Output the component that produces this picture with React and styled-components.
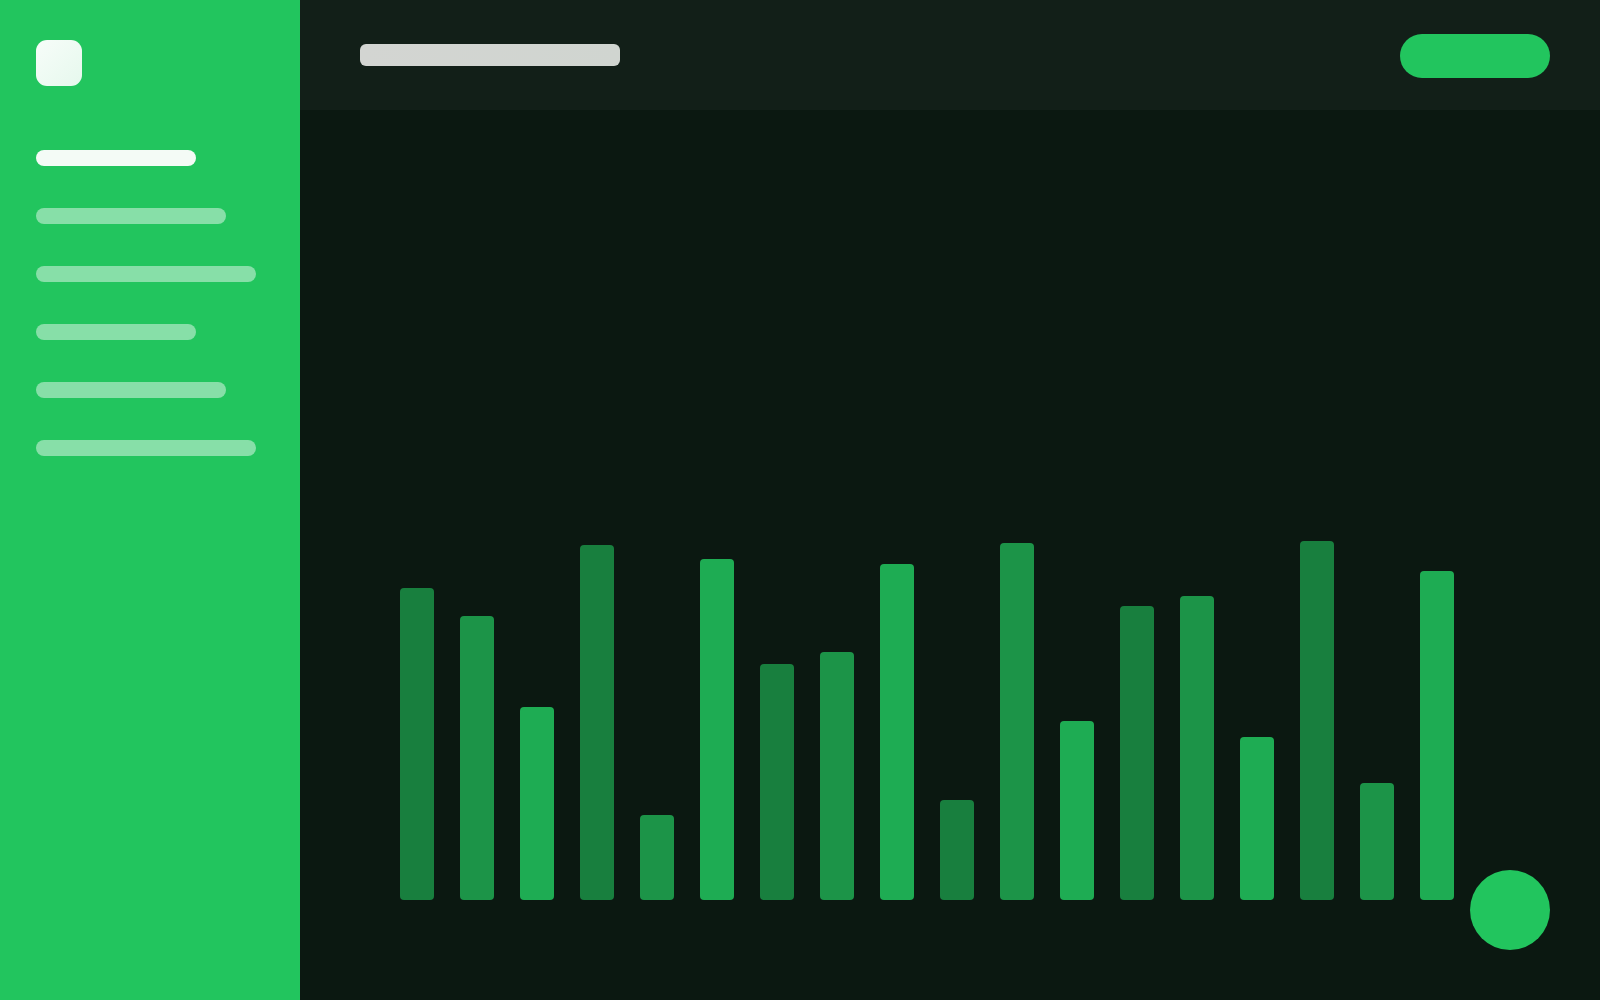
import React from 'react';
import styled, { createGlobalStyle } from 'styled-components';

const GlobalStyle = createGlobalStyle`
  html, body { margin: 0; padding: 0; height: 100%; }
  body { font-family: Inter, "Liberation Sans", sans-serif; background: #0b1811; }
  #root { height: 100%; }
`;

const Shell = styled.div`
  display: flex;
  width: 100%;
  height: 1000px;
  overflow: hidden;
`;

const Sidebar = styled.aside`
  width: 300px;
  flex-shrink: 0;
  background: #22c55e;
  padding: 40px 36px;
  box-sizing: border-box;
  display: flex;
  flex-direction: column;
`;

const Logo = styled.div`
  width: 46px;
  height: 46px;
  border-radius: 11px;
  background: linear-gradient(135deg, #f7fdf9, #e6f8ed);
  margin-bottom: 64px;
`;

const Nav = styled.nav`
  display: flex;
  flex-direction: column;
  gap: 42px;
`;

const NavItem = styled.div`
  height: 16px;
  width: ${p => p.$w}px;
  border-radius: 8px;
  background: ${p => (p.$active ? '#f4fbf6' : 'rgba(255,255,255,0.46)')};
`;

const Main = styled.main`
  flex: 1;
  display: flex;
  flex-direction: column;
  position: relative;
  background: #0b1811;
`;

const TopBar = styled.header`
  height: 110px;
  flex-shrink: 0;
  background: #121f18;
  display: flex;
  align-items: center;
  justify-content: space-between;
  padding: 0 50px 0 60px;
`;

const Search = styled.div`
  width: 260px;
  height: 22px;
  border-radius: 6px;
  background: linear-gradient(90deg, #d3d5d2, #d0d5d0);
`;

const Action = styled.div`
  width: 150px;
  height: 44px;
  margin-top: 2px;
  border-radius: 22px;
  background: #22c55e;
`;

const Chart = styled.section`
  flex: 1;
  display: flex;
  align-items: flex-end;
  gap: 26px;
  padding: 0 0 100px 100px;
`;

const Bar = styled.div`
  width: 34px;
  border-radius: 4px;
  background: #22c55e;
  opacity: ${p => p.$level};
`;

const Fab = styled.div`
  position: absolute;
  right: 50px;
  bottom: 50px;
  width: 80px;
  height: 80px;
  border-radius: 50%;
  background: #22c55e;
`;

const navWidths = [160, 190, 220, 160, 190, 220];
const heights = [312, 284, 193, 355, 85, 341, 236, 248, 336, 100, 357, 179, 294, 304, 163, 359, 117, 329];
const levels = [0.6, 0.72, 0.86];

export default function App() {
  return (
    <>
      <GlobalStyle />
      <Shell>
        <Sidebar>
          <Logo />
          <Nav>
            {navWidths.map((w, i) => (
              <NavItem key={i} $w={w} $active={i === 0} />
            ))}
          </Nav>
        </Sidebar>
        <Main>
          <TopBar>
            <Search />
            <Action />
          </TopBar>
          <Chart>
            {heights.map((h, i) => (
              <Bar key={i} $level={levels[i % 3]} style={{ height: h }} />
            ))}
          </Chart>
          <Fab />
        </Main>
      </Shell>
    </>
  );
}
